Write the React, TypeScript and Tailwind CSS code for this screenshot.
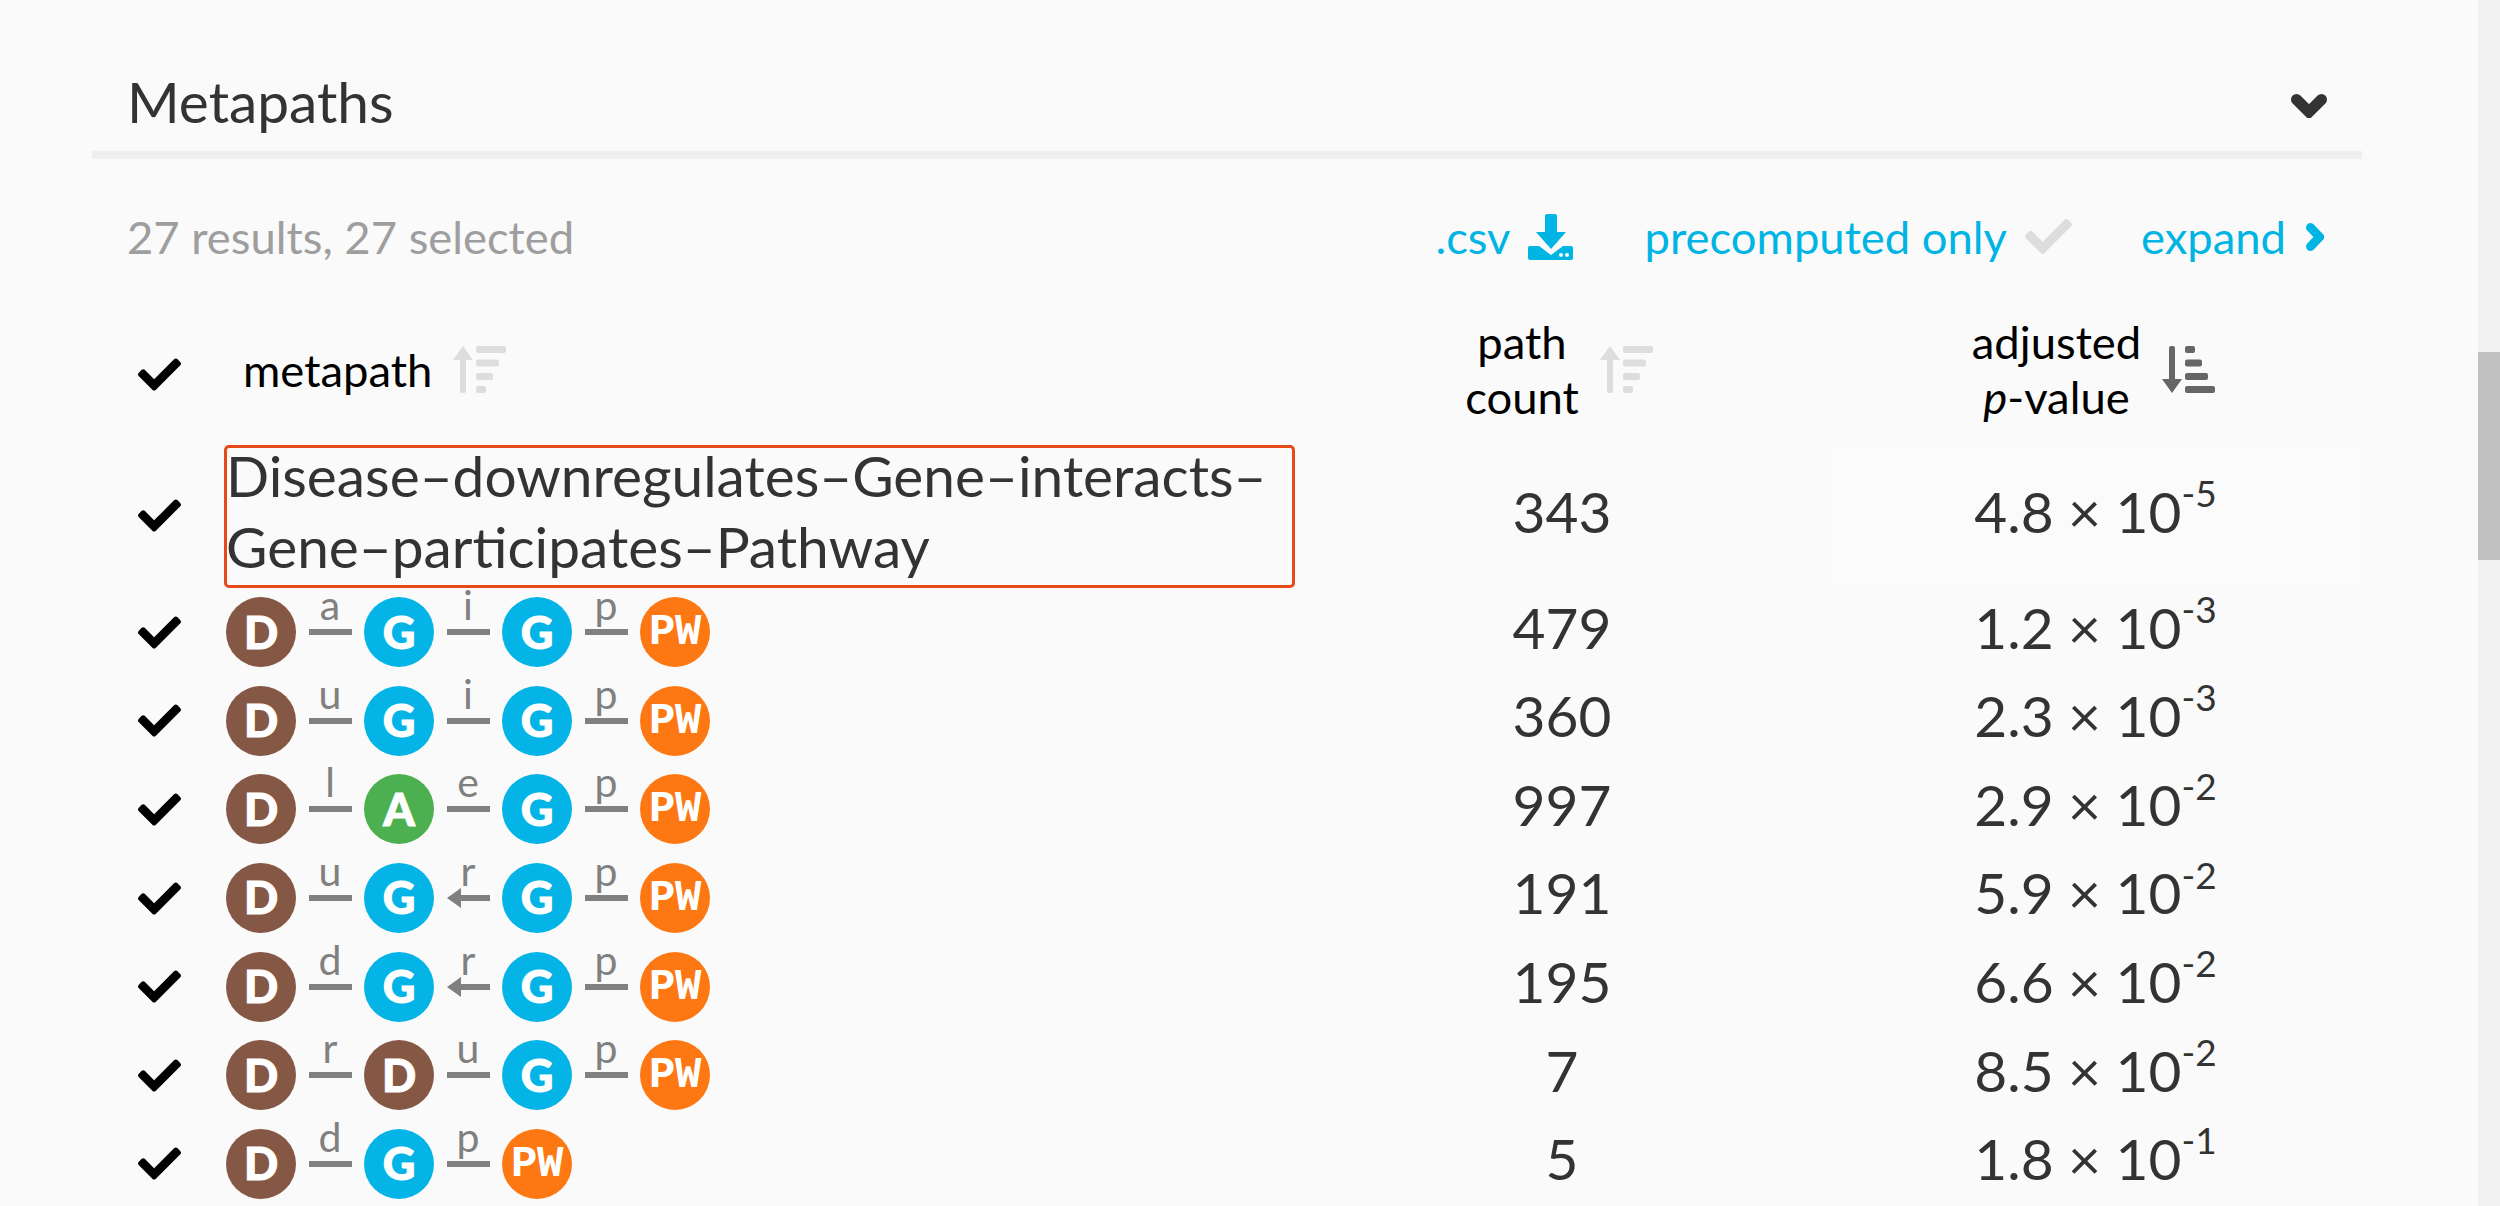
import React from "react";
import { FaCheck } from "react-icons/fa";

type Node = "D" | "G" | "A" | "PW";
const nodeBg: Record<Node, string> = { D: "bg-[#855745]", G: "bg-[#04b4e6]", A: "bg-[#4caf50]", PW: "bg-[#fd7712]" };

function Circle({ n }: { n: Node }) {
  return (
    <span
      className={`flex h-[70px] w-[70px] shrink-0 items-center justify-center rounded-full ${nodeBg[n]} text-white ${
        n === "PW"
          ? "font-['Liberation_Mono',monospace] font-bold text-[44px] tracking-[-0.5px]"
          : "font-['Lato',sans-serif] font-black text-[45px] [-webkit-text-stroke:1px_white]"
      }`}
    >
      {n}
    </span>
  );
}

function Edge({ l, back }: { l: string; back?: boolean }) {
  return (
    <span className="relative flex h-[70px] w-[68px] shrink-0 items-center justify-center">
      <span className="absolute left-0 right-0 top-[-15px] text-center text-[41px] leading-[46px] text-[#808080]">{l}</span>
      <span className="relative block h-[6px] w-[43px] bg-[#808080]">
        {back && <span className="absolute left-0 top-[-7px] h-0 w-0 border-y-[10px] border-r-[14px] border-y-transparent border-r-[#808080] bg-[#fafafa]" />}
      </span>
    </span>
  );
}

function SortIcon({ dir, className }: { dir: "up" | "down"; className: string }) {
  return dir === "up" ? (
    <svg viewBox="0 0 53 47" className={`h-[47px] w-[53px] shrink-0 fill-current ${className}`}>
      <path d="M10 0 L20 14 H13 V45 Q13 47 11 47 H9 Q7 47 7 45 V14 H0 Z" />
      <rect x="23" y="0" width="30" height="7" rx="2" />
      <rect x="23" y="13.5" width="23" height="7" rx="2" />
      <rect x="23" y="27" width="17" height="7" rx="2" />
      <rect x="23" y="40" width="10" height="7" rx="2" />
    </svg>
  ) : (
    <svg viewBox="0 0 53 47" className={`h-[47px] w-[53px] shrink-0 fill-current ${className}`}>
      <path d="M10 47 L20 33 H13 V2 Q13 0 11 0 H9 Q7 0 7 2 V33 H0 Z" />
      <rect x="23" y="0" width="10" height="7" rx="2" />
      <rect x="23" y="13.5" width="17" height="7" rx="2" />
      <rect x="23" y="27" width="23" height="7" rx="2" />
      <rect x="23" y="40" width="30" height="7" rx="2" />
    </svg>
  );
}

function DownloadIcon() {
  return (
    <svg viewBox="0 0 45 46" className="h-[46px] w-[45px] shrink-0 fill-current">
      <path d="M19 0 H27 Q29 0 29 2 V18 H38 L23 35 L8 18 H17 V2 Q17 0 19 0 Z" />
      <path
        fillRule="evenodd"
        d="M2 32 H11 L23 41 L35 32 H43 Q45 32 45 34 V44 Q45 46 43 46 H2 Q0 46 0 44 V34 Q0 32 2 32 Z M31 41 a2 2 0 1 0 4 0 a2 2 0 1 0 -4 0 Z M37 41 a2 2 0 1 0 4 0 a2 2 0 1 0 -4 0 Z"
      />
    </svg>
  );
}

type Row = { path: Node[]; edges: (string | [string])[]; count: string; m: string; e: string };
const rows: Row[] = [
  { path: ["D", "G", "G", "PW"], edges: ["a", "i", "p"], count: "479", m: "1.2", e: "-3" },
  { path: ["D", "G", "G", "PW"], edges: ["u", "i", "p"], count: "360", m: "2.3", e: "-3" },
  { path: ["D", "A", "G", "PW"], edges: ["l", "e", "p"], count: "997", m: "2.9", e: "-2" },
  { path: ["D", "G", "G", "PW"], edges: ["u", ["r"], "p"], count: "191", m: "5.9", e: "-2" },
  { path: ["D", "G", "G", "PW"], edges: ["d", ["r"], "p"], count: "195", m: "6.6", e: "-2" },
  { path: ["D", "D", "G", "PW"], edges: ["r", "u", "p"], count: "7", m: "8.5", e: "-2" },
  { path: ["D", "G", "PW"], edges: ["d", "p"], count: "5", m: "1.8", e: "-1" },
];

function PValue({ m, e }: { m: string; e: string }) {
  return (
    <span className="whitespace-nowrap">
      {m} × 10<sup className="relative top-[-6px] align-super text-[37px] leading-none">{e}</sup>
    </span>
  );
}

export default function App() {
  return (
    <div className="flex h-[1206px] w-[2500px] overflow-hidden bg-[#fafafa] font-['Lato',sans-serif] text-[#333]">
      <main className="w-[2478px] pl-[92px] pr-[116px]">
        <div className="flex h-[159px] items-center justify-between border-b-[8px] border-[#eeeeee] pl-[35px] pr-[35px] pt-[50px]">
          <h1 className="text-[56.8px] leading-[106px] font-normal">Metapaths</h1>
          <svg viewBox="0 0 36 24" className="mt-[10px] h-[24px] w-[36px] fill-none stroke-[#333] stroke-[11]">
            <polyline points="5.5,5.5 18,18 30.5,5.5" strokeLinecap="round" />
          </svg>
        </div>
        <div className="flex h-[122px] items-center justify-between pl-[35px] pr-[38px] pt-[34px] text-[45.4px] text-[#00b4e4]">
          <span className="text-[#9e9e9e]">27 results, 27 selected</span>
          <div className="flex items-center">
            <span>.csv</span>
            <span className="ml-[17px] mr-[72px]"><DownloadIcon /></span>
            <span>precomputed only</span>
            <FaCheck className="ml-[18px] mr-[69px] h-[47px] w-[47px] text-[#dddddd]" />
            <span>expand</span>
            <svg viewBox="0 0 18 28" className="ml-[20px] h-[28px] w-[18px] fill-none stroke-[#00b4e4] stroke-[9]">
              <polyline points="4.5,4.5 13.5,14 4.5,23.5" strokeLinecap="round" />
            </svg>
          </div>
        </div>
        <div className="flex h-[164px] items-center pt-[12px] text-[45.4px] leading-[55px] text-black">
          <div className="flex w-[132px] pl-[46px] pt-[11px]"><FaCheck className="h-[43px] w-[43px]" /></div>
          <div className="flex w-[1071px] items-center pl-[19px]">
            <span>metapath</span>
            <SortIcon dir="up" className="ml-[21px] text-[#dddddd]" />
          </div>
          <div className="flex w-[534px] items-center justify-center pr-[6px] text-center">
            <span>path<br />count</span>
            <SortIcon dir="up" className="ml-[21px] text-[#dddddd]" />
          </div>
          <div className="flex w-[533px] items-center justify-center pr-[4px] text-center">
            <span>adjusted<br /><i>p</i>-value</span>
            <SortIcon dir="down" className="ml-[21px] text-[#666666]" />
          </div>
        </div>
        <div className="flex h-[143px] items-center text-[56.8px]">
          <div className="flex w-[132px] pb-[2px] pl-[46px] text-black"><FaCheck className="h-[43px] w-[43px]" /></div>
          <div className="h-[143px] w-[1071px] rounded-[5px] border-[3px] border-[#e64a19] leading-[71px] whitespace-nowrap">
            <div className="ml-[-1px] mt-[-8px]">Disease–downregulates–Gene–interacts–<br />Gene–participates–Pathway</div>
          </div>
          <div className="w-[534px] pb-[10px] text-center">343</div>
          <div className="flex h-full w-[533px] items-center justify-center bg-[#fbfbfb] pb-[10px]"><PValue m="4.8" e="-5" /></div>
        </div>
        {rows.map((r, i) => (
          <div key={i} className="flex h-[88.6px] items-center text-[56.8px]">
            <div className="flex w-[132px] pl-[46px] text-black"><FaCheck className="h-[43px] w-[43px]" /></div>
            <div className="flex w-[1071px] items-center pl-[2px]">
              {r.path.map((n, j) => {
                const e = j > 0 ? r.edges[j - 1] : null;
                return (
                  <React.Fragment key={j}>
                    {e !== null && <Edge l={Array.isArray(e) ? e[0] : e} back={Array.isArray(e)} />}
                    <Circle n={n} />
                  </React.Fragment>
                );
              })}
            </div>
            <div className="w-[534px] pb-[10px] text-center">{r.count}</div>
            <div className="w-[533px] pb-[10px] text-center"><PValue m={r.m} e={r.e} /></div>
          </div>
        ))}
      </main>
      <aside className="h-full w-[22px] bg-[#f1f1f1] pt-[352px]">
        <div className="h-[208px] bg-[#c1c1c1]" />
      </aside>
    </div>
  );
}
